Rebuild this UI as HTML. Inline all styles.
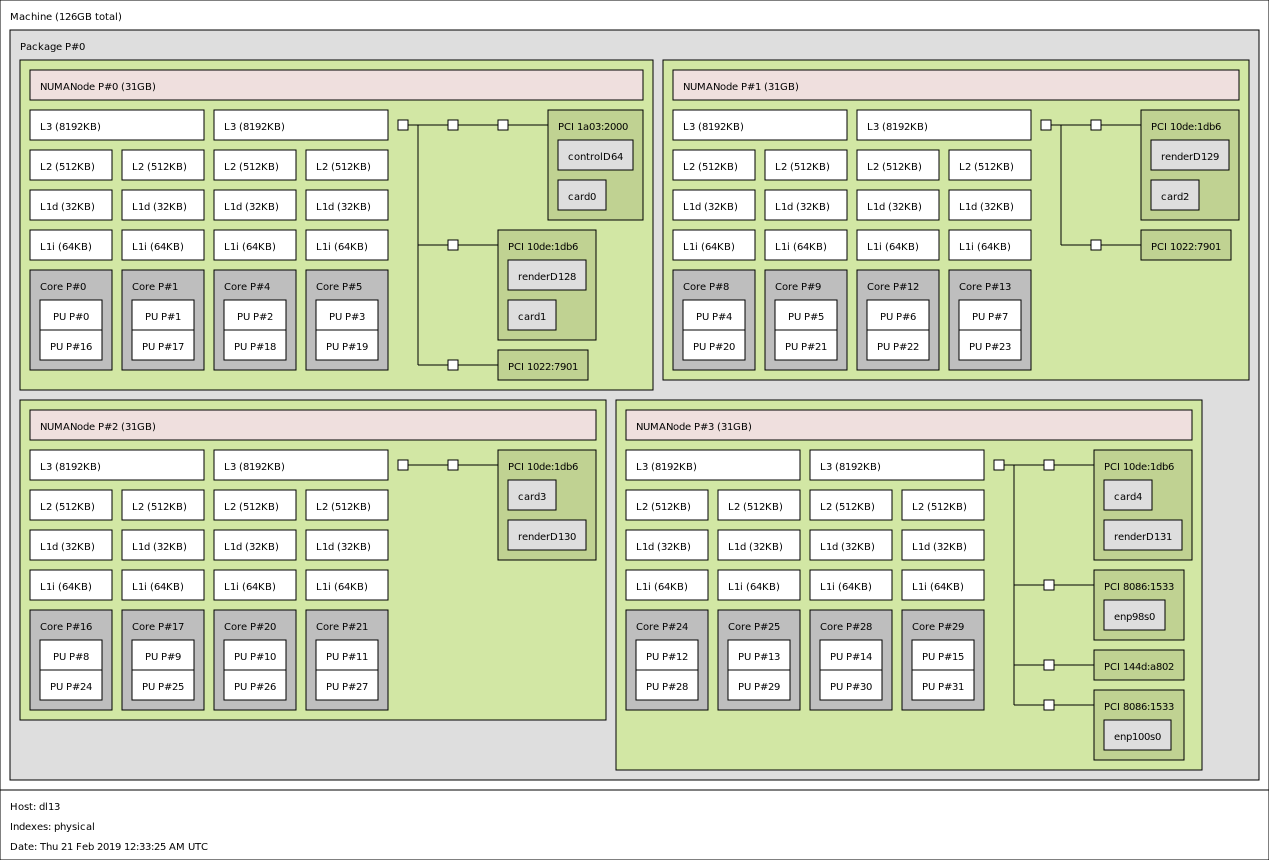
<!DOCTYPE html>
<html lang="en">
<head>
<meta charset="utf-8">
<title>Machine topology</title>
<style>
html,body{margin:0;padding:0;background:#fff;width:1269px;height:860px;overflow:hidden}
svg{display:block}
rect,line{stroke:#000;stroke-width:1}
rect{fill:#fff}
text{font-family:"DejaVu Sans",sans-serif;font-size:10px;fill:#000}
.pk{fill:#dedede}
.gr{fill:#d2e7a4}
.nu{fill:#efdfde}
.co{fill:#bebebe}
.pci{fill:#c0d292}
.os{fill:#dedede}
</style>
</head>
<body>
<svg width="1269" height="860" viewBox="0 0 1269 860" xmlns="http://www.w3.org/2000/svg">
<defs>
<g id="blk">
<rect x="30" y="110" width="174" height="30"/><rect x="214" y="110" width="174" height="30"/>
<rect x="30" y="150" width="82" height="30"/><rect x="122" y="150" width="82" height="30"/><rect x="214" y="150" width="82" height="30"/><rect x="306" y="150" width="82" height="30"/>
<rect x="30" y="190" width="82" height="30"/><rect x="122" y="190" width="82" height="30"/><rect x="214" y="190" width="82" height="30"/><rect x="306" y="190" width="82" height="30"/>
<rect x="30" y="230" width="82" height="30"/><rect x="122" y="230" width="82" height="30"/><rect x="214" y="230" width="82" height="30"/><rect x="306" y="230" width="82" height="30"/>
<rect class="co" x="30" y="270" width="82" height="100"/><rect class="co" x="122" y="270" width="82" height="100"/><rect class="co" x="214" y="270" width="82" height="100"/><rect class="co" x="306" y="270" width="82" height="100"/>
<rect x="40" y="300" width="62" height="30"/><rect x="40" y="330" width="62" height="30"/>
<rect x="132" y="300" width="62" height="30"/><rect x="132" y="330" width="62" height="30"/>
<rect x="224" y="300" width="62" height="30"/><rect x="224" y="330" width="62" height="30"/>
<rect x="316" y="300" width="62" height="30"/><rect x="316" y="330" width="62" height="30"/>
</g>
</defs>

<rect x="0" y="0" width="1269" height="790"/>
<text transform="translate(10 20)" x="0 9 15 21 27 30 36 42 45 49 55 61 67 75 82 85 89 95 99 105 108">Machine (126GB total)</text>
<rect class="pk" x="10" y="30" width="1249" height="750"/>
<text transform="translate(20 50)" x="0 6 12 18 24 30 36 42 45 51 59">Package P#0</text>

<!-- NUMA 0 -->
<rect class="gr" x="20" y="60" width="633" height="330"/>
<rect class="nu" x="30" y="70" width="613" height="30"/>
<text transform="translate(40 90)" x="0 7 14 23 30 37 43 49 55 58 64 72 78 81 85 91 97 105 112">NUMANode P#0 (31GB)</text>
<use href="#blk"/>
<g>
<g transform="translate(40)">
<text y="130" x="0 6 12 15 19 25 31 37 43 50 57">L3 (8192KB)</text>
<text y="170" x="0 6 12 15 19 25 31 37 44 51">L2 (512KB)</text>
<text y="210" x="0 6 12 18 21 25 31 37 44 51">L1d (32KB)</text>
<text y="250" x="0 6 12 15 18 22 28 34 41 48">L1i (64KB)</text>
<text y="290" x="0 7 13 17 23 26 32 40">Core P#0</text>
<text y="320" x="13 19 26 29 35 43">PU P#0</text>
<text y="350" x="10 16 23 26 32 40 46">PU P#16</text>
</g>
<g transform="translate(132)">
<text y="170" x="0 6 12 15 19 25 31 37 44 51">L2 (512KB)</text>
<text y="210" x="0 6 12 18 21 25 31 37 44 51">L1d (32KB)</text>
<text y="250" x="0 6 12 15 18 22 28 34 41 48">L1i (64KB)</text>
<text y="290" x="0 7 13 17 23 26 32 40">Core P#1</text>
<text y="320" x="13 19 26 29 35 43">PU P#1</text>
<text y="350" x="10 16 23 26 32 40 46">PU P#17</text>
</g>
<g transform="translate(224)">
<text y="130" x="0 6 12 15 19 25 31 37 43 50 57">L3 (8192KB)</text>
<text y="170" x="0 6 12 15 19 25 31 37 44 51">L2 (512KB)</text>
<text y="210" x="0 6 12 18 21 25 31 37 44 51">L1d (32KB)</text>
<text y="250" x="0 6 12 15 18 22 28 34 41 48">L1i (64KB)</text>
<text y="290" x="0 7 13 17 23 26 32 40">Core P#4</text>
<text y="320" x="13 19 26 29 35 43">PU P#2</text>
<text y="350" x="10 16 23 26 32 40 46">PU P#18</text>
</g>
<g transform="translate(316)">
<text y="170" x="0 6 12 15 19 25 31 37 44 51">L2 (512KB)</text>
<text y="210" x="0 6 12 18 21 25 31 37 44 51">L1d (32KB)</text>
<text y="250" x="0 6 12 15 18 22 28 34 41 48">L1i (64KB)</text>
<text y="290" x="0 7 13 17 23 26 32 40">Core P#5</text>
<text y="320" x="13 19 26 29 35 43">PU P#3</text>
<text y="350" x="10 16 23 26 32 40 46">PU P#19</text>
</g>
</g>
<line x1="408" y1="125" x2="548" y2="125"/><line x1="418" y1="125" x2="418" y2="365"/><line x1="418" y1="245" x2="498" y2="245"/><line x1="418" y1="365" x2="498" y2="365"/>
<rect x="398" y="120" width="10" height="10"/><rect x="448" y="120" width="10" height="10"/><rect x="498" y="120" width="10" height="10"/><rect x="448" y="240" width="10" height="10"/><rect x="448" y="360" width="10" height="10"/>
<rect class="pci" x="548" y="110" width="95" height="110"/><text transform="translate(558 130)" x="0 6 13 16 19 25 31 37 43 46 52 58 64">PCI 1a03:2000</text>
<rect class="os" x="558" y="140" width="75" height="30"/><text transform="translate(568 160)" x="0 6 12 18 22 26 32 35 43 49">controlD64</text>
<rect class="os" x="558" y="180" width="48" height="30"/><text transform="translate(568 200)" x="0 6 12 16 22">card0</text>
<rect class="pci" x="498" y="230" width="98" height="110"/><text transform="translate(508 250)" x="0 6 13 16 19 25 31 37 43 46 52 58 64">PCI 10de:1db6</text>
<rect class="os" x="508" y="260" width="78" height="30"/><text transform="translate(518 280)" x="0 4 10 16 22 28 32 40 46 52">renderD128</text>
<rect class="os" x="508" y="300" width="48" height="30"/><text transform="translate(518 320)" x="0 6 12 16 22">card1</text>
<rect class="pci" x="498" y="350" width="90" height="30"/><text transform="translate(508 370)" x="0 6 13 16 19 25 31 37 43 46 52 58 64">PCI 1022:7901</text>

<!-- NUMA 1 -->
<rect class="gr" x="663" y="60" width="586" height="320"/>
<rect class="nu" x="673" y="70" width="566" height="30"/>
<text transform="translate(683 90)" x="0 7 14 23 30 37 43 49 55 58 64 72 78 81 85 91 97 105 112">NUMANode P#1 (31GB)</text>
<use href="#blk" transform="translate(643,0)"/>
<g transform="translate(643,0)">
<g transform="translate(40)">
<text y="130" x="0 6 12 15 19 25 31 37 43 50 57">L3 (8192KB)</text>
<text y="170" x="0 6 12 15 19 25 31 37 44 51">L2 (512KB)</text>
<text y="210" x="0 6 12 18 21 25 31 37 44 51">L1d (32KB)</text>
<text y="250" x="0 6 12 15 18 22 28 34 41 48">L1i (64KB)</text>
<text y="290" x="0 7 13 17 23 26 32 40">Core P#8</text>
<text y="320" x="13 19 26 29 35 43">PU P#4</text>
<text y="350" x="10 16 23 26 32 40 46">PU P#20</text>
</g>
<g transform="translate(132)">
<text y="170" x="0 6 12 15 19 25 31 37 44 51">L2 (512KB)</text>
<text y="210" x="0 6 12 18 21 25 31 37 44 51">L1d (32KB)</text>
<text y="250" x="0 6 12 15 18 22 28 34 41 48">L1i (64KB)</text>
<text y="290" x="0 7 13 17 23 26 32 40">Core P#9</text>
<text y="320" x="13 19 26 29 35 43">PU P#5</text>
<text y="350" x="10 16 23 26 32 40 46">PU P#21</text>
</g>
<g transform="translate(224)">
<text y="130" x="0 6 12 15 19 25 31 37 43 50 57">L3 (8192KB)</text>
<text y="170" x="0 6 12 15 19 25 31 37 44 51">L2 (512KB)</text>
<text y="210" x="0 6 12 18 21 25 31 37 44 51">L1d (32KB)</text>
<text y="250" x="0 6 12 15 18 22 28 34 41 48">L1i (64KB)</text>
<text y="290" x="0 7 13 17 23 26 32 40 46">Core P#12</text>
<text y="320" x="13 19 26 29 35 43">PU P#6</text>
<text y="350" x="10 16 23 26 32 40 46">PU P#22</text>
</g>
<g transform="translate(316)">
<text y="170" x="0 6 12 15 19 25 31 37 44 51">L2 (512KB)</text>
<text y="210" x="0 6 12 18 21 25 31 37 44 51">L1d (32KB)</text>
<text y="250" x="0 6 12 15 18 22 28 34 41 48">L1i (64KB)</text>
<text y="290" x="0 7 13 17 23 26 32 40 46">Core P#13</text>
<text y="320" x="13 19 26 29 35 43">PU P#7</text>
<text y="350" x="10 16 23 26 32 40 46">PU P#23</text>
</g>
</g>
<line x1="1051" y1="125" x2="1141" y2="125"/><line x1="1061" y1="125" x2="1061" y2="245"/><line x1="1061" y1="245" x2="1141" y2="245"/>
<rect x="1041" y="120" width="10" height="10"/><rect x="1091" y="120" width="10" height="10"/><rect x="1091" y="240" width="10" height="10"/>
<rect class="pci" x="1141" y="110" width="98" height="110"/><text transform="translate(1151 130)" x="0 6 13 16 19 25 31 37 43 46 52 58 64">PCI 10de:1db6</text>
<rect class="os" x="1151" y="140" width="78" height="30"/><text transform="translate(1161 160)" x="0 4 10 16 22 28 32 40 46 52">renderD129</text>
<rect class="os" x="1151" y="180" width="48" height="30"/><text transform="translate(1161 200)" x="0 6 12 16 22">card2</text>
<rect class="pci" x="1141" y="230" width="90" height="30"/><text transform="translate(1151 250)" x="0 6 13 16 19 25 31 37 43 46 52 58 64">PCI 1022:7901</text>

<!-- NUMA 2 -->
<rect class="gr" x="20" y="400" width="586" height="320"/>
<rect class="nu" x="30" y="410" width="566" height="30"/>
<text transform="translate(40 430)" x="0 7 14 23 30 37 43 49 55 58 64 72 78 81 85 91 97 105 112">NUMANode P#2 (31GB)</text>
<use href="#blk" transform="translate(0,340)"/>
<g transform="translate(0,340)">
<g transform="translate(40)">
<text y="130" x="0 6 12 15 19 25 31 37 43 50 57">L3 (8192KB)</text>
<text y="170" x="0 6 12 15 19 25 31 37 44 51">L2 (512KB)</text>
<text y="210" x="0 6 12 18 21 25 31 37 44 51">L1d (32KB)</text>
<text y="250" x="0 6 12 15 18 22 28 34 41 48">L1i (64KB)</text>
<text y="290" x="0 7 13 17 23 26 32 40 46">Core P#16</text>
<text y="320" x="13 19 26 29 35 43">PU P#8</text>
<text y="350" x="10 16 23 26 32 40 46">PU P#24</text>
</g>
<g transform="translate(132)">
<text y="170" x="0 6 12 15 19 25 31 37 44 51">L2 (512KB)</text>
<text y="210" x="0 6 12 18 21 25 31 37 44 51">L1d (32KB)</text>
<text y="250" x="0 6 12 15 18 22 28 34 41 48">L1i (64KB)</text>
<text y="290" x="0 7 13 17 23 26 32 40 46">Core P#17</text>
<text y="320" x="13 19 26 29 35 43">PU P#9</text>
<text y="350" x="10 16 23 26 32 40 46">PU P#25</text>
</g>
<g transform="translate(224)">
<text y="130" x="0 6 12 15 19 25 31 37 43 50 57">L3 (8192KB)</text>
<text y="170" x="0 6 12 15 19 25 31 37 44 51">L2 (512KB)</text>
<text y="210" x="0 6 12 18 21 25 31 37 44 51">L1d (32KB)</text>
<text y="250" x="0 6 12 15 18 22 28 34 41 48">L1i (64KB)</text>
<text y="290" x="0 7 13 17 23 26 32 40 46">Core P#20</text>
<text y="320" x="10 16 23 26 32 40 46">PU P#10</text>
<text y="350" x="10 16 23 26 32 40 46">PU P#26</text>
</g>
<g transform="translate(316)">
<text y="170" x="0 6 12 15 19 25 31 37 44 51">L2 (512KB)</text>
<text y="210" x="0 6 12 18 21 25 31 37 44 51">L1d (32KB)</text>
<text y="250" x="0 6 12 15 18 22 28 34 41 48">L1i (64KB)</text>
<text y="290" x="0 7 13 17 23 26 32 40 46">Core P#21</text>
<text y="320" x="10 16 23 26 32 40 46">PU P#11</text>
<text y="350" x="10 16 23 26 32 40 46">PU P#27</text>
</g>
</g>
<line x1="408" y1="465" x2="498" y2="465"/>
<rect x="398" y="460" width="10" height="10"/><rect x="448" y="460" width="10" height="10"/>
<rect class="pci" x="498" y="450" width="98" height="110"/><text transform="translate(508 470)" x="0 6 13 16 19 25 31 37 43 46 52 58 64">PCI 10de:1db6</text>
<rect class="os" x="508" y="480" width="48" height="30"/><text transform="translate(518 500)" x="0 6 12 16 22">card3</text>
<rect class="os" x="508" y="520" width="78" height="30"/><text transform="translate(518 540)" x="0 4 10 16 22 28 32 40 46 52">renderD130</text>

<!-- NUMA 3 -->
<rect class="gr" x="616" y="400" width="586" height="370"/>
<rect class="nu" x="626" y="410" width="566" height="30"/>
<text transform="translate(636 430)" x="0 7 14 23 30 37 43 49 55 58 64 72 78 81 85 91 97 105 112">NUMANode P#3 (31GB)</text>
<use href="#blk" transform="translate(596,340)"/>
<g transform="translate(596,340)">
<g transform="translate(40)">
<text y="130" x="0 6 12 15 19 25 31 37 43 50 57">L3 (8192KB)</text>
<text y="170" x="0 6 12 15 19 25 31 37 44 51">L2 (512KB)</text>
<text y="210" x="0 6 12 18 21 25 31 37 44 51">L1d (32KB)</text>
<text y="250" x="0 6 12 15 18 22 28 34 41 48">L1i (64KB)</text>
<text y="290" x="0 7 13 17 23 26 32 40 46">Core P#24</text>
<text y="320" x="10 16 23 26 32 40 46">PU P#12</text>
<text y="350" x="10 16 23 26 32 40 46">PU P#28</text>
</g>
<g transform="translate(132)">
<text y="170" x="0 6 12 15 19 25 31 37 44 51">L2 (512KB)</text>
<text y="210" x="0 6 12 18 21 25 31 37 44 51">L1d (32KB)</text>
<text y="250" x="0 6 12 15 18 22 28 34 41 48">L1i (64KB)</text>
<text y="290" x="0 7 13 17 23 26 32 40 46">Core P#25</text>
<text y="320" x="10 16 23 26 32 40 46">PU P#13</text>
<text y="350" x="10 16 23 26 32 40 46">PU P#29</text>
</g>
<g transform="translate(224)">
<text y="130" x="0 6 12 15 19 25 31 37 43 50 57">L3 (8192KB)</text>
<text y="170" x="0 6 12 15 19 25 31 37 44 51">L2 (512KB)</text>
<text y="210" x="0 6 12 18 21 25 31 37 44 51">L1d (32KB)</text>
<text y="250" x="0 6 12 15 18 22 28 34 41 48">L1i (64KB)</text>
<text y="290" x="0 7 13 17 23 26 32 40 46">Core P#28</text>
<text y="320" x="10 16 23 26 32 40 46">PU P#14</text>
<text y="350" x="10 16 23 26 32 40 46">PU P#30</text>
</g>
<g transform="translate(316)">
<text y="170" x="0 6 12 15 19 25 31 37 44 51">L2 (512KB)</text>
<text y="210" x="0 6 12 18 21 25 31 37 44 51">L1d (32KB)</text>
<text y="250" x="0 6 12 15 18 22 28 34 41 48">L1i (64KB)</text>
<text y="290" x="0 7 13 17 23 26 32 40 46">Core P#29</text>
<text y="320" x="10 16 23 26 32 40 46">PU P#15</text>
<text y="350" x="10 16 23 26 32 40 46">PU P#31</text>
</g>
</g>
<line x1="1004" y1="465" x2="1094" y2="465"/><line x1="1014" y1="465" x2="1014" y2="705"/><line x1="1014" y1="585" x2="1094" y2="585"/><line x1="1014" y1="665" x2="1094" y2="665"/><line x1="1014" y1="705" x2="1094" y2="705"/>
<rect x="994" y="460" width="10" height="10"/><rect x="1044" y="460" width="10" height="10"/><rect x="1044" y="580" width="10" height="10"/><rect x="1044" y="660" width="10" height="10"/><rect x="1044" y="700" width="10" height="10"/>
<rect class="pci" x="1094" y="450" width="98" height="110"/><text transform="translate(1104 470)" x="0 6 13 16 19 25 31 37 43 46 52 58 64">PCI 10de:1db6</text>
<rect class="os" x="1104" y="480" width="48" height="30"/><text transform="translate(1114 500)" x="0 6 12 16 22">card4</text>
<rect class="os" x="1104" y="520" width="78" height="30"/><text transform="translate(1114 540)" x="0 4 10 16 22 28 32 40 46 52">renderD131</text>
<rect class="pci" x="1094" y="570" width="90" height="70"/><text transform="translate(1104 590)" x="0 6 13 16 19 25 31 37 43 46 52 58 64">PCI 8086:1533</text>
<rect class="os" x="1104" y="600" width="61" height="30"/><text transform="translate(1114 620)" x="0 6 12 18 24 30 35">enp98s0</text>
<rect class="pci" x="1094" y="650" width="90" height="30"/><text transform="translate(1104 670)" x="0 6 13 16 19 25 31 37 43 46 52 58 64">PCI 144d:a802</text>
<rect class="pci" x="1094" y="690" width="90" height="70"/><text transform="translate(1104 710)" x="0 6 13 16 19 25 31 37 43 46 52 58 64">PCI 8086:1533</text>
<rect class="os" x="1104" y="720" width="67" height="30"/><text transform="translate(1114 740)" x="0 6 12 18 24 30 36 41">enp100s0</text>

<!-- Legend -->
<rect x="0" y="790" width="1269" height="70"/>
<text transform="translate(10 810)" x="0 8 14 19 23 26 29 35 38 44">Host: dl13</text>
<text transform="translate(10 830)" x="0 3 9 15 21 27 33 38 41 44 50 56 62 67 70 76 82">Indexes: physical</text>
<text transform="translate(10 850)" x="0 8 14 18 24 27 30 36 42 48 51 57 63 66 72 78 84 87 93 99 105 111 114 120 126 129 135 141 144 150 156 159 166 175 178 185 191">Date: Thu 21 Feb 2019 12:33:25 AM UTC</text>
</svg>
</body>
</html>
